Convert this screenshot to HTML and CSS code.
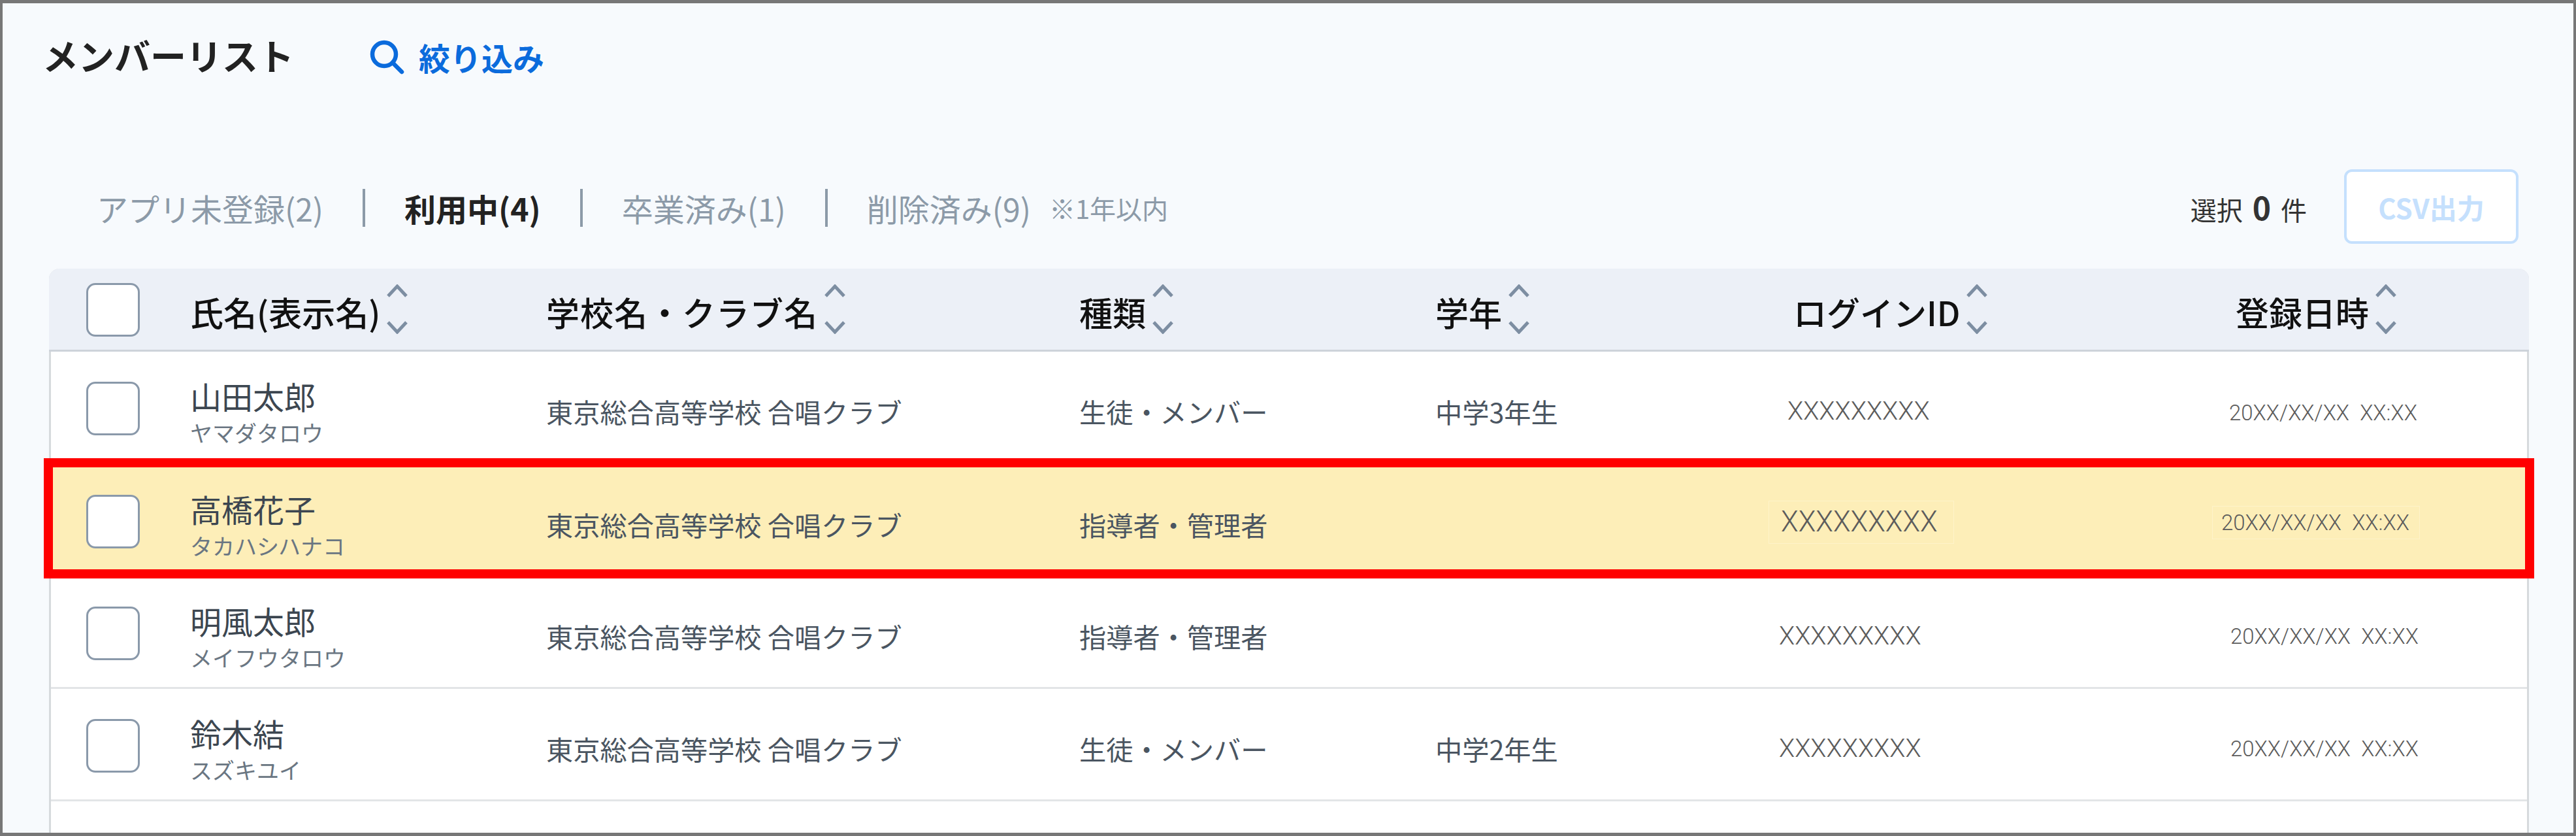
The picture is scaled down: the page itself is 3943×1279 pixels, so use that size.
FILE: index.html
```html
<!DOCTYPE html>
<html lang="ja">
<head>
  <meta charset="UTF-8" />
  <title>メンバーリスト</title>
  <link rel="stylesheet" href="styles.css">
</head>
<body>
  <div class="title-row">
    <h1 class="title">メンバーリスト</h1>
    <a class="filter">
      <svg class="filter-icon" viewBox="0 0 54 54"><circle cx="23" cy="23" r="18" /><line x1="36" y1="36" x2="50" y2="50" /></svg>
      絞り込み
    </a>
  </div>

  <div class="tab-row">
    <div class="tabs">
      <span class="tab">アプリ未登録(2)</span>
      <i class="sep"></i>
      <span class="tab active">利用中(4)</span>
      <i class="sep"></i>
      <span class="tab">卒業済み(1)</span>
      <i class="sep"></i>
      <span class="tab">削除済み(9)</span>
      <span class="note">※1年以内</span>
    </div>
    <div class="count">選択 <b>0</b> 件</div>
    <button class="btn-csv">CSV出力</button>
  </div>

  <div class="table">
    <div class="row head">
      <div><span class="check"></span></div>
      <div class="th"><span>氏名(表示名)</span><svg class="sort" viewBox="0 0 32 76"><path d="M2 18 16 3 30 18M2 58 16 73 30 58" /></svg></div>
      <div class="th th-school"><span>学校名・クラブ名</span><svg class="sort" viewBox="0 0 32 76"><path d="M2 18 16 3 30 18M2 58 16 73 30 58" /></svg></div>
      <div class="th"><span>種類</span><svg class="sort" viewBox="0 0 32 76"><path d="M2 18 16 3 30 18M2 58 16 73 30 58" /></svg></div>
      <div class="th"><span>学年</span><svg class="sort" viewBox="0 0 32 76"><path d="M2 18 16 3 30 18M2 58 16 73 30 58" /></svg></div>
      <div class="th th-id"><span>ログインID</span><svg class="sort" viewBox="0 0 32 76"><path d="M2 18 16 3 30 18M2 58 16 73 30 58" /></svg></div>
      <div class="th th-date"><span>登録日時</span><svg class="sort" viewBox="0 0 32 76"><path d="M2 18 16 3 30 18M2 58 16 73 30 58" /></svg></div>
    </div>

    <div class="row">
      <div><span class="check"></span></div>
      <div class="cell name">山田太郎<small>ヤマダタロウ</small></div>
      <div class="cell">東京総合高等学校 合唱クラブ</div>
      <div class="cell">生徒・メンバー</div>
      <div class="cell">中学3年生</div>
      <div class="cell login first">XXXXXXXXX</div>
      <div class="cell date first">20XX/XX/XX&nbsp;&nbsp;XX:XX</div>
    </div>

    <div class="row marked">
      <div><span class="check"></span></div>
      <div class="cell name">高橋花子<small>タカハシハナコ</small></div>
      <div class="cell">東京総合高等学校 合唱クラブ</div>
      <div class="cell">指導者・管理者</div>
      <div class="cell"></div>
      <div class="cell login"><span class="pasted-id">XXXXXXXXX</span></div>
      <div class="cell date"><span class="pasted-date">20XX/XX/XX&nbsp;&nbsp;XX:XX</span></div>
    </div>

    <div class="row">
      <div><span class="check"></span></div>
      <div class="cell name">明風太郎<small>メイフウタロウ</small></div>
      <div class="cell">東京総合高等学校 合唱クラブ</div>
      <div class="cell">指導者・管理者</div>
      <div class="cell"></div>
      <div class="cell login">XXXXXXXXX</div>
      <div class="cell date">20XX/XX/XX&nbsp;&nbsp;XX:XX</div>
    </div>

    <div class="row">
      <div><span class="check"></span></div>
      <div class="cell name">鈴木結<small>スズキユイ</small></div>
      <div class="cell">東京総合高等学校 合唱クラブ</div>
      <div class="cell">生徒・メンバー</div>
      <div class="cell">中学2年生</div>
      <div class="cell login">XXXXXXXXX</div>
      <div class="cell date">20XX/XX/XX&nbsp;&nbsp;XX:XX</div>
    </div>
  </div>
</body>
</html>
```
FILE: styles.css
```css
* {
  box-sizing: border-box;
}
html {
  height: 100%;
}
body {
  margin: 0;
  height: 100vh;
  overflow: hidden;
  display: flex;
  flex-direction: column;
  background: #f7fafd;
  border: solid #777;
  border-width: 5px 4px;
  font-family: "Noto Sans CJK JP", "Noto Sans", sans-serif;
  color: #4a5561;
}
.title-row {
  height: 156px;
  padding-left: 61px;
  display: flex;
  align-items: center;
  gap: 115px;
}
.title {
  margin: 0;
  font-size: 55px;
  font-weight: 700;
  color: #222;
}
.filter {
  margin-top: 7px;
  display: flex;
  align-items: center;
  gap: 22px;
  font-size: 48px;
  font-weight: 700;
  color: #0b6bdc;
}
.filter-icon {
  width: 54px;
  height: 54px;
  fill: none;
  stroke: #0b6bdc;
  stroke-width: 6.5;
  stroke-linecap: round;
}
.tab-row {
  margin-top: 98px;
  height: 114px;
  padding: 0 84px 0 144px;
  display: flex;
  align-items: center;
}
.tabs {
  flex: 1;
  display: flex;
  align-items: center;
  gap: 60px;
  padding-top: 3px;
  font-size: 48px;
  color: #8c9aa8;
}
.tab.active {
  font-weight: 700;
  color: #222;
}
.sep {
  width: 4px;
  height: 58px;
  background: #8c9aa8;
}
.note {
  margin-left: -32px;
  font-size: 40px;
}
.count {
  margin-right: 57px;
  font-size: 40px;
  color: #333;
}
.count b {
  font-size: 48px;
  margin: 0 6px;
}
.btn-csv {
  width: 267px;
  height: 114px;
  padding: 0;
  background: #fff;
  border: 4px solid #c5e0fd;
  border-radius: 12px;
  font-family: inherit;
  font-size: 42px;
  font-weight: 700;
  color: #c5e0fd;
}
.table {
  flex: 1;
  margin: 38px 68px 0 71px;
  background: #fff;
  border: solid #d6dadd;
  border-width: 0 3px;
  border-radius: 16px 16px 0 0;
}
.row {
  display: grid;
  grid-template-columns: 213px 545px 816px 545px 526px 689px 1fr;
  align-items: center;
  height: 172px;
  border-bottom: 3px solid #e3e5e7;
}
.row.head {
  height: 127px;
  margin: 0 -3px;
  padding: 0 3px;
  background: #ecf0f7;
  border-bottom-color: #cdd3da;
  border-radius: 16px 16px 0 0;
  color: #111;
}
.check {
  display: block;
  width: 82px;
  height: 82px;
  margin-left: 54px;
  background: #fff;
  border: 3px solid #8a99aa;
  border-radius: 14px;
}
.row:not(.head) .check {
  margin-top: 4px;
}
.row.head .check {
  margin-top: 2px;
}
.th {
  display: flex;
  align-items: center;
  gap: 10px;
  font-size: 51px;
  font-weight: 500;
}
.th span {
  padding-top: 8px;
  white-space: nowrap;
}
.th-school {
  letter-spacing: 1px;
}
.th-id {
  padding-left: 22px;
}
.th-date {
  padding-left: 10px;
}
.sort {
  flex: none;
  width: 32px;
  height: 76px;
  fill: none;
  stroke: #7d8ea2;
  stroke-width: 5;
}
.cell {
  padding-top: 12px;
  font-size: 41.2px;
  white-space: nowrap;
}
.name {
  padding-top: 0;
  margin-top: 10px;
  font-size: 48px;
  line-height: 66px;
  color: #3c4650;
}
.name small {
  display: block;
  margin-top: 2px;
  font-size: 34px;
  line-height: 44px;
  color: #6a7682;
}
.login {
  font-family: Roboto, sans-serif;
  font-weight: 300;
  font-size: 39.5px;
  color: #5c5c5c;
}
.login.first {
  padding-left: 13px;
}
.date {
  padding-left: 2px;
  padding-top: 14px;
  font-family: Roboto, sans-serif;
  font-weight: 300;
  font-size: 33px;
  color: #5c5c5c;
}
.date.first {
  padding-left: 0;
  padding-top: 18px;
}
/* yellow row with the red frame round it */
.marked {
  position: relative;
  border-bottom: 0;
}
.marked::before {
  content: "";
  position: absolute;
  inset: -9px -11px -3px -11px;
  background: #fdeeb8;
  border: 14px solid #f00;
}
.marked > * {
  position: relative;
}
.marked .login,
.marked .date {
  padding-top: 6px;
}
.pasted-id,
.pasted-date {
  display: inline-block;
  border: 1px solid #fef3c9;
}
.pasted-id {
  margin-left: -16px;
  padding: 0 24px 0 18px;
  font-size: 43.5px;
  line-height: 64px;
}
.pasted-date {
  margin-left: -28px;
  padding: 0 15px 0 13px;
  line-height: 49px;
}
```
